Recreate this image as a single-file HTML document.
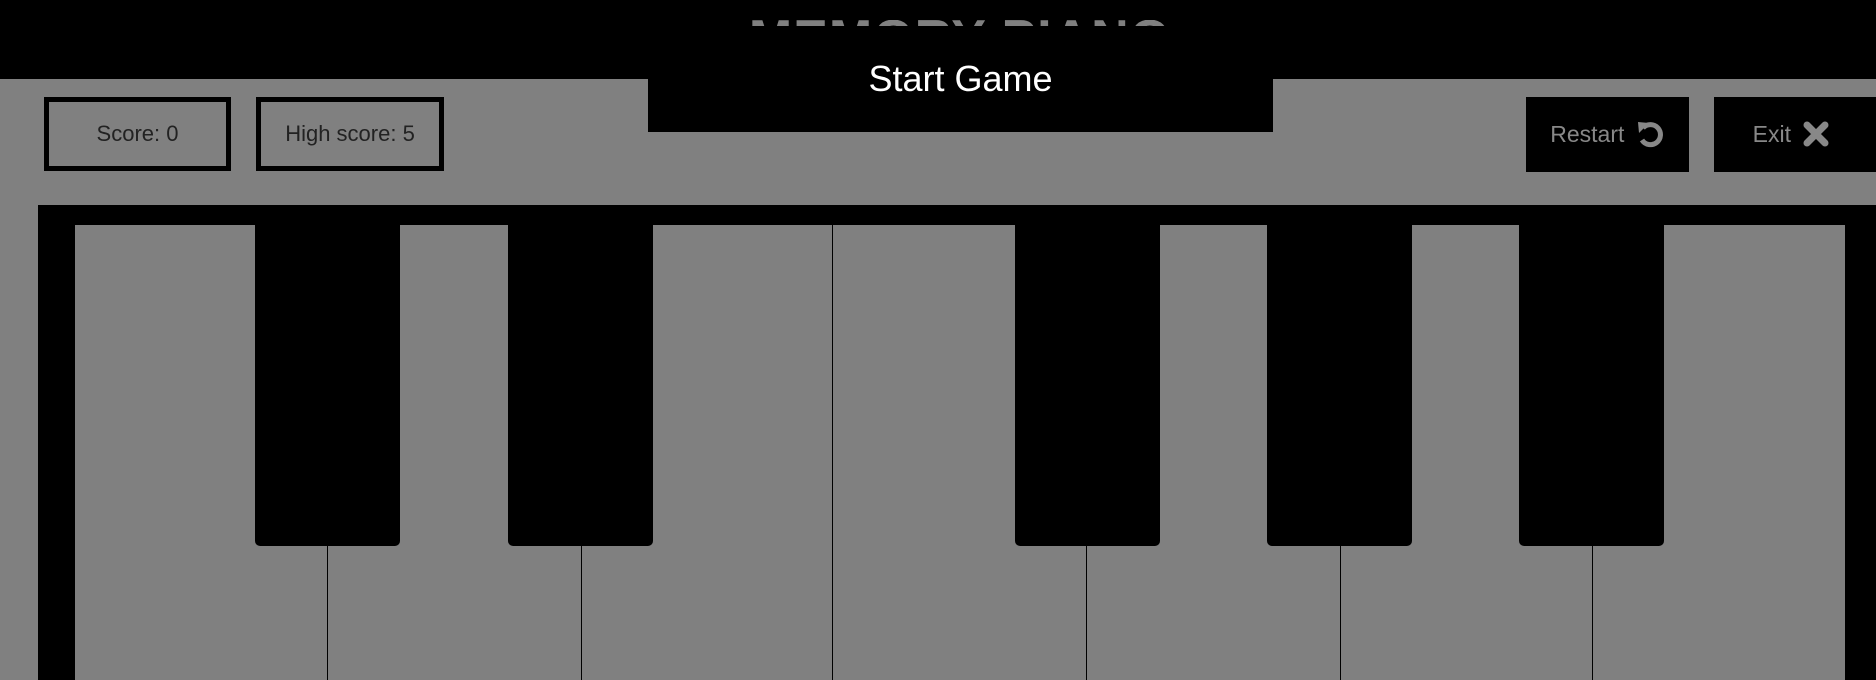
<!DOCTYPE html>
<html><head><style>
html,body{margin:0;padding:0;width:1876px;height:680px;overflow:hidden;background:#808080;font-family:"Liberation Sans",Arial,sans-serif;}
.abs{position:absolute;box-sizing:border-box;}
.top{left:0;top:0;width:1876px;height:79px;background:#000;}
.title{left:0;top:20px;width:1876px;height:6px;overflow:hidden;z-index:5;}
.title div{position:absolute;left:0;width:1920px;top:-7px;text-align:center;color:#808080;font-weight:bold;font-size:52px;line-height:52px;letter-spacing:1px;}
.start{left:648px;top:0;width:625px;height:132px;background:#000;color:#fff;font-size:36px;text-align:center;line-height:158px;}
.box{top:97px;height:74px;border:5px solid #000;color:#222;font-size:22px;text-align:center;line-height:64px;}
.btn{top:97px;height:75px;background:#000;color:#888;font-size:23px;line-height:75px;text-align:center;}
.piano{left:38px;top:205px;width:1838px;height:475px;background:#000;}
.white{top:225px;height:455px;background:#808080;border-right:1px solid #000;}
.black{top:225px;height:321px;width:145px;background:#000;border-radius:0 0 5px 5px;}
</style></head><body>
<div class="abs top"></div>
<div class="abs title"><div>MEMORY PIANO</div></div>
<div class="abs start">Start Game</div>
<div class="abs box" style="left:44px;width:187px;">Score: 0</div>
<div class="abs box" style="left:256px;width:188px;">High score: 5</div>
<div class="abs btn" style="left:1526px;width:163px;">Restart <svg width="30" height="30" viewBox="0 0 30 30" style="vertical-align:-7px;margin-left:4px"><path d="M8 9 A10 10 0 1 1 7 21" fill="none" stroke="#888" stroke-width="5"/><path d="M3 3 L14 4 L4 14 Z" fill="#888"/></svg></div>
<div class="abs btn" style="left:1714px;width:162px;padding-right:8px;">Exit <svg width="26" height="26" viewBox="0 0 26 26" style="vertical-align:-5px;margin-left:6px"><path d="M4 4 L22 22 M22 4 L4 22" stroke="#888" stroke-width="7" stroke-linecap="round"/></svg></div>
<div class="abs piano"></div>
<div class="abs white" style="left:75px;width:253px"></div>
<div class="abs white" style="left:328px;width:254px"></div>
<div class="abs white" style="left:582px;width:251px"></div>
<div class="abs white" style="left:833px;width:254px"></div>
<div class="abs white" style="left:1087px;width:254px"></div>
<div class="abs white" style="left:1341px;width:252px"></div>
<div class="abs white" style="left:1593px;width:252px;border-right:none"></div>
<div class="abs black" style="left:255px"></div>
<div class="abs black" style="left:508px"></div>
<div class="abs black" style="left:1015px"></div>
<div class="abs black" style="left:1267px"></div>
<div class="abs black" style="left:1519px"></div>
</body></html>
